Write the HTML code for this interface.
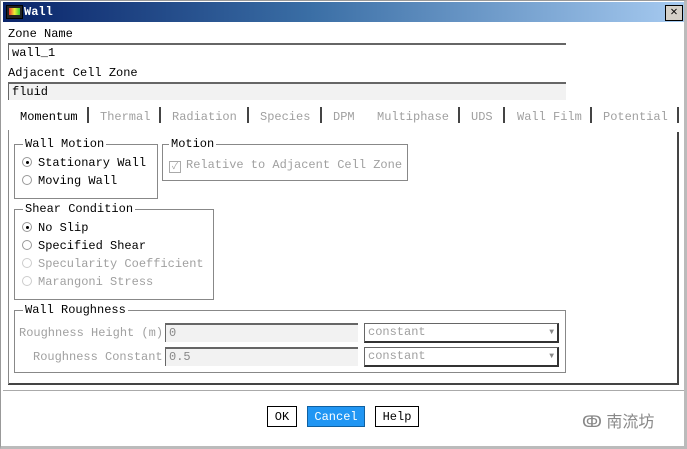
<!DOCTYPE html><html><head><style>
body{margin:0;width:687px;height:449px;overflow:hidden;background:#fff;font-family:"Liberation Mono","Noto Sans CJK SC",monospace;font-size:12px;color:#000}
.a{position:absolute;white-space:nowrap}
.g{color:#a0a0a0}
.box{position:absolute;border:1px solid #888}
.lg{position:absolute;background:#fff;padding:0 2px;top:-8px;left:8px}
.in{position:absolute;border-top:2px solid #666;border-left:1px solid #666;background:#fff;height:16px;line-height:16px;padding-left:3px;box-sizing:border-box}
.rad{display:inline-block;width:8px;height:8px;border-radius:50%;border:1px solid #999;margin-right:6px;vertical-align:-1px;position:relative}
.rad.on::after{content:"";position:absolute;left:2.5px;top:2.5px;width:3px;height:3px;border-radius:50%;background:#000}
.btn{position:absolute;border:1px solid #000;background:#fff;height:21px;line-height:21px;text-align:center;box-sizing:border-box}
.dd{position:absolute;border:1px solid #666;border-right:2px solid #333;border-bottom:2px solid #333;height:20px;line-height:17px;box-sizing:border-box;padding-left:3px;color:#a0a0a0}
.dd::after{content:"▼";position:absolute;right:3px;top:0;font-size:8px;color:#888}
</style></head><body>
<div class="a" style="left:0;top:0;width:687px;height:449px;border:1px solid #999;border-right:3px solid #bbb;border-bottom:3px solid #bbb;box-sizing:border-box"></div>
<div class="a" style="left:3px;top:2px;width:681px;height:20px;background:linear-gradient(90deg,#0a246a,#3a6ea5 45%,#a6caf0)"></div>
<div class="a" style="left:6px;top:5px;width:15px;height:12px;background:#222;border:1px solid #000"><div style="margin:2px;height:7px;background:linear-gradient(90deg,#e33,#ee3,#3c3)"></div></div>
<div class="a" style="left:24px;top:5px;color:#fff;font-weight:bold;font-size:12px">Wall</div>
<div class="a" style="left:665px;top:5px;width:16px;height:14px;background:#d4d0c8;border:1px solid #000;font-size:12px;line-height:13px;text-align:center;font-weight:bold">✕</div>
<div class="a" style="left:8px;top:27px">Zone Name</div>
<div class="in" style="left:8px;top:43px;width:558px;height:17px">wall_1</div>
<div class="a" style="left:8px;top:66px">Adjacent Cell Zone</div>
<div class="in" style="left:8px;top:82px;width:558px;height:18px;background:#f2f2f2">fluid</div>
<div class="a" style="left:20px;top:110px">Momentum</div>
<div class="a g" style="left:100px;top:110px">Thermal</div>
<div class="a g" style="left:172px;top:110px">Radiation</div>
<div class="a g" style="left:260px;top:110px">Species</div>
<div class="a g" style="left:333px;top:110px">DPM</div>
<div class="a g" style="left:377px;top:110px">Multiphase</div>
<div class="a g" style="left:471px;top:110px">UDS</div>
<div class="a g" style="left:517px;top:110px">Wall Film</div>
<div class="a g" style="left:603px;top:110px">Potential</div>
<div class="a" style="left:87px;top:107px;width:2px;height:16px;background:#444"></div>
<div class="a" style="left:159px;top:107px;width:2px;height:16px;background:#444"></div>
<div class="a" style="left:247px;top:107px;width:2px;height:16px;background:#444"></div>
<div class="a" style="left:320px;top:107px;width:2px;height:16px;background:#444"></div>
<div class="a" style="left:458px;top:107px;width:2px;height:16px;background:#444"></div>
<div class="a" style="left:503px;top:107px;width:2px;height:16px;background:#444"></div>
<div class="a" style="left:590px;top:107px;width:2px;height:16px;background:#444"></div>
<div class="a" style="left:677px;top:107px;width:2px;height:16px;background:#444"></div>
<div class="a" style="left:677px;top:132px;width:2px;height:253px;background:#444"></div>
<div class="a" style="left:8px;top:383px;width:671px;height:2px;background:#444"></div>
<div class="a" style="left:8px;top:130px;width:1px;height:254px;background:#888"></div>
<div class="a" style="left:3px;top:390px;width:681px;height:1px;background:#aaa"></div>
<div class="box" style="left:14px;top:144px;width:142px;height:53px"><span class="lg">Wall Motion</span>
<div class="a" style="left:7px;top:11px"><span class="rad on"></span>Stationary Wall</div>
<div class="a" style="left:7px;top:29px"><span class="rad"></span>Moving Wall</div></div>
<div class="box" style="left:162px;top:144px;width:244px;height:35px"><span class="lg" style="left:6px">Motion</span>
<div class="a g" style="left:6px;top:13px"><span style="display:inline-block;width:10px;height:10px;border:1px solid #aaa;font-size:9px;line-height:10px;text-align:center;margin-right:5px;vertical-align:-1px">✓</span>Relative to Adjacent Cell Zone</div></div>
<div class="box" style="left:14px;top:209px;width:198px;height:89px"><span class="lg">Shear Condition</span>
<div class="a" style="left:7px;top:11px"><span class="rad on"></span>No Slip</div>
<div class="a" style="left:7px;top:29px"><span class="rad"></span>Specified Shear</div>
<div class="a g" style="left:7px;top:47px"><span class="rad" style="border-color:#ccc"></span>Specularity Coefficient</div>
<div class="a g" style="left:7px;top:65px"><span class="rad" style="border-color:#ccc"></span>Marangoni Stress</div></div>
<div class="box" style="left:14px;top:310px;width:550px;height:61px"><span class="lg">Wall Roughness</span>
<div class="a g" style="left:4px;top:15px">Roughness Height (m)</div>
<div class="a g" style="left:18px;top:39px">Roughness Constant</div></div>
<div class="in" style="left:165px;top:323px;width:193px;height:19px;background:#f2f2f2;color:#888">0</div>
<div class="in" style="left:165px;top:347px;width:193px;height:19px;background:#f2f2f2;color:#888">0.5</div>
<div class="dd" style="left:364px;top:323px;width:195px">constant</div>
<div class="dd" style="left:364px;top:347px;width:195px">constant</div>
<div class="btn" style="left:267px;top:406px;width:30px">OK</div>
<div class="btn" style="left:307px;top:406px;width:58px;background:#2196f3;color:#fff;border-color:#1060a0">Cancel</div>
<div class="btn" style="left:375px;top:406px;width:44px">Help</div>
<div class="a" style="left:582px;top:408px;color:#888;font-size:16px;font-family:'Liberation Sans','Noto Sans CJK SC',sans-serif">ↂ 南流坊</div>
</body></html>
